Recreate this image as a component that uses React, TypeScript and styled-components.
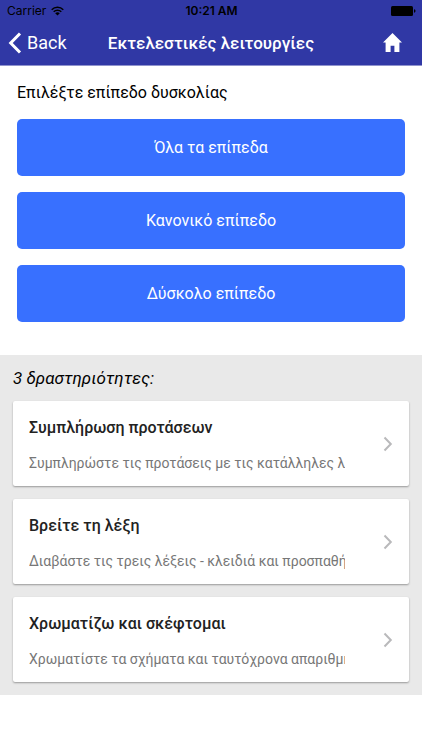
import React from "react";
import styled, { createGlobalStyle } from "styled-components";

const GlobalStyle = createGlobalStyle`
  *, *::before, *::after { box-sizing: border-box; }
  body {
    margin: 0;
    background: #fff;
    color: #000;
    font-family: Roboto, "Noto Sans", sans-serif;
  }
  button { font: inherit; border: 0; cursor: pointer; }
  h1, h2, h3, p, ul { margin: 0; padding: 0; }
`;

const Header = styled.header`
  background: #3038a5;
  border-bottom: 1px solid #8f93cd;
`;

const StatusBar = styled.div`
  display: grid;
  grid-template-columns: 1fr auto 1fr;
  align-items: center;
  height: 22px;
  padding: 0 6px 0 7px;
  font: 400 12px/22px Inter, sans-serif;
`;

const Carrier = styled.span`
  display: flex;
  align-items: center;
  gap: 5px;
`;

const Clock = styled.time`
  font-weight: 600;
`;

const Battery = styled.svg`
  justify-self: end;
`;

const NavBar = styled.nav`
  display: grid;
  grid-template-columns: 1fr auto 1fr;
  align-items: center;
  height: 43px;
  padding: 0 8px 2px;
  color: #fff;
`;

const BackButton = styled.button`
  display: flex;
  align-items: center;
  justify-self: start;
  gap: 5px;
  padding: 0;
  background: none;
  color: inherit;
  font-size: 18px;
  line-height: 24px;
`;

const HomeButton = styled.button`
  display: flex;
  justify-self: end;
  padding: 0 12px 0 0;
  background: none;
  color: inherit;
`;

const Title = styled.h1`
  font-size: 17px;
  line-height: 24px;
  font-weight: 500;
`;

const Levels = styled.section`
  display: flex;
  flex-direction: column;
  gap: 16px;
  padding: 15px 17px 33px;
`;

const Prompt = styled.h2`
  padding-top: 1px;
  font-size: 16px;
  line-height: 21px;
  font-weight: 400;
`;

const LevelButton = styled.button`
  height: 57px;
  border-radius: 5px;
  background: #3870ff;
  color: #fff;
  font-size: 16px;
  line-height: 24px;
`;

const Activities = styled.section`
  padding: 11px 13px 13px;
  background: #e9e9e9;
`;

const Count = styled.h2`
  margin-bottom: 11px;
  font-size: 17px;
  line-height: 24px;
  font-weight: 400;
  font-style: italic;
`;

const CardList = styled.ul`
  display: flex;
  flex-direction: column;
  gap: 13px;
  list-style: none;
`;

const Card = styled.button`
  display: flex;
  align-items: center;
  width: 100%;
  height: 85px;
  padding: 0 16px;
  border-radius: 2px;
  background: #fff;
  box-shadow: 0 1px 2px rgba(0, 0, 0, 0.35);
  text-align: left;
`;

const CardText = styled.span`
  display: flex;
  flex: 1;
  flex-direction: column;
  gap: 12px;
  min-width: 0;
  margin-right: 38px;
  padding-top: 2px;
`;

const CardTitle = styled.span`
  color: #222;
  font-size: 16px;
  line-height: 24px;
  font-weight: 500;
`;

const CardDetail = styled.span`
  overflow: hidden;
  color: #777;
  font-size: 14px;
  line-height: 22px;
  white-space: nowrap;
`;

const levels = ["Όλα τα επίπεδα", "Κανονικό επίπεδο", "Δύσκολο επίπεδο"];

const activities = [
  {
    title: "Συμπλήρωση προτάσεων",
    detail: "Συμπληρώστε τις προτάσεις με τις κατάλληλες λέξεις",
  },
  {
    title: "Βρείτε τη λέξη",
    detail: "Διαβάστε τις τρεις λέξεις - κλειδιά και προσπαθήστε",
  },
  {
    title: "Χρωματίζω και σκέφτομαι",
    detail: "Χρωματίστε τα σχήματα και ταυτόχρονα απαριθμήστε",
  },
];

const WifiIcon = () => (
  <svg width="13" height="10" viewBox="0 0 13 10" aria-hidden="true">
    <g fill="none" stroke="#000" strokeWidth="1.5">
      <path d="M.7 3.7a8.2 8.2 0 0 1 11.6 0" />
      <path d="M2.7 5.8a5.4 5.4 0 0 1 7.6 0" />
    </g>
    <path d="M4.2 7.3a3.3 3.3 0 0 1 4.6 0L6.5 9.6z" />
  </svg>
);

const BatteryIcon = () => (
  <Battery width="25" height="10" viewBox="0 0 25 10" aria-hidden="true">
    <rect width="22" height="10" rx="1.5" />
    <path d="M23 3.3c2 .3 2 3.1 0 3.4z" />
  </Battery>
);

const BackIcon = () => (
  <svg width="14" height="22" viewBox="0 0 14 22" aria-hidden="true">
    <path d="M12 1.5 2.7 11l9.3 9.5" fill="none" stroke="currentColor" strokeWidth="3" />
  </svg>
);

const HomeIcon = () => (
  <svg width="19" height="19" viewBox="0 0 19 19" aria-hidden="true">
    <path d="M9.5 0 0 9.6h2.6V19h5v-6.2h3.8V19h5V9.6H19z" fill="currentColor" />
  </svg>
);

const ChevronIcon = () => (
  <svg width="10" height="16" viewBox="0 0 10 16" aria-hidden="true">
    <path d="m1.5 1.5 6.3 6.5-6.3 6.5" fill="none" stroke="#b9b9bb" strokeWidth="2" />
  </svg>
);

export default function App() {
  return (
    <>
      <GlobalStyle />
      <Header>
        <StatusBar>
          <Carrier>
            Carrier
            <WifiIcon />
          </Carrier>
          <Clock>10:21 AM</Clock>
          <BatteryIcon />
        </StatusBar>
        <NavBar>
          <BackButton type="button">
            <BackIcon />
            Back
          </BackButton>
          <Title lang="el">Εκτελεστικές λειτουργίες</Title>
          <HomeButton type="button" aria-label="Home">
            <HomeIcon />
          </HomeButton>
        </NavBar>
      </Header>
      <main lang="el">
        <Levels>
          <Prompt>Επιλέξτε επίπεδο δυσκολίας</Prompt>
          {levels.map((level) => (
            <LevelButton type="button" key={level}>
              {level}
            </LevelButton>
          ))}
        </Levels>
        <Activities>
          <Count>3 δραστηριότητες:</Count>
          <CardList>
            {activities.map(({ title, detail }) => (
              <li key={title}>
                <Card type="button">
                  <CardText>
                    <CardTitle>{title}</CardTitle>
                    <CardDetail>{detail}</CardDetail>
                  </CardText>
                  <ChevronIcon />
                </Card>
              </li>
            ))}
          </CardList>
        </Activities>
      </main>
    </>
  );
}
